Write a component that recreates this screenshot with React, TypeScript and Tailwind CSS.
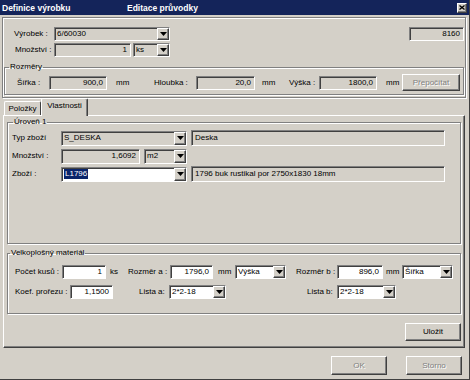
import React from 'react'

const sunken =
  'border border-t-[#808080] border-l-[#808080] border-b-white border-r-white shadow-[inset_1px_1px_0_#404040]'
const raised =
  'border border-t-white border-l-white border-b-[#404040] border-r-[#404040] shadow-[inset_-1px_-1px_0_#808080]'
const etched = 'border border-[#808080] shadow-[inset_1px_1px_0_#fff,1px_1px_0_#fff]'

function Arrow() {
  return (
    <svg width="7" height="4" viewBox="0 0 7 4">
      <polygon points="0,0 7,0 3.5,4" fill="#000" />
    </svg>
  )
}

function Input({ className, value, white }: { className: string; value: string; white?: boolean }) {
  return (
    <div className={`${sunken} ${white ? 'bg-white' : 'bg-[#d4d0c8]'} flex items-center justify-end pr-[3px] ${className}`}>
      {value}
    </div>
  )
}

function TextBox({ className, value }: { className: string; value: string }) {
  return <div className={`${sunken} bg-[#d4d0c8] flex items-center pl-[3px] ${className}`}>{value}</div>
}

function Combo({ className, value, white, selected }: { className: string; value: string; white?: boolean; selected?: boolean }) {
  return (
    <div className={`${sunken} ${white ? 'bg-white' : 'bg-[#d4d0c8]'} flex items-stretch ${className}`}>
      <div className="flex-1 flex items-center pl-[2px] overflow-hidden whitespace-nowrap">
        {selected ? <span className="bg-[#0a246a] text-white px-[1px]">{value}</span> : value}
      </div>
      <div className={`${raised} bg-[#d4d0c8] w-[12px] flex items-center justify-center`}>
        <Arrow />
      </div>
    </div>
  )
}

function Button({ className, label, disabled }: { className: string; label: string; disabled?: boolean }) {
  return (
    <div
      className={`${raised} bg-[#d4d0c8] flex items-center justify-center ${
        disabled ? 'text-[#808080] [text-shadow:1px_1px_0_#fff]' : 'text-black'
      } ${className}`}
    >
      {label}
    </div>
  )
}

export default function App() {
  return (
    <div className="w-[470px] h-[380px] bg-[#d4d0c8] text-[8px] leading-[10px] text-black overflow-hidden border-r border-b border-r-[#404040] border-b-[#404040] font-['Liberation_Sans',Arial,sans-serif]">
      <div className="h-[15px] bg-[#14245a] flex items-center text-white font-bold text-[8.5px]">
        <span className="w-[127px] pl-[2px]">Definice výrobku</span>
        <span>Editace průvodky</span>
        <div className={`${raised} bg-[#d4d0c8] ml-auto mr-[2px] w-[10px] h-[10px] flex items-center justify-center`}>
          <svg width="6" height="5" viewBox="0 0 6 5">
            <path d="M0.5 0.5 L5.5 4.5 M5.5 0.5 L0.5 4.5" stroke="#000" strokeWidth="1.3" />
          </svg>
        </div>
      </div>

      <div className="pl-[2px] pr-[3px] pt-[2px]">
        <div className={`${etched} h-[81px] pt-[9px]`}>
          <div className="flex items-center h-[14px] pl-[11px]">
            <span className="w-[40px]">Výrobek :</span>
            <Combo className="w-[116px] h-[14px]" value="6/60030" />
            <Input className="ml-auto mr-[1px] w-[55px] h-[14px]" value="8160" />
          </div>
          <div className="flex items-center h-[14px] mt-[2px] pl-[12px]">
            <span className="w-[39px]">Množství :</span>
            <Input className="w-[77px] h-[14px]" value="1" />
            <Combo className="ml-[2px] w-[37px] h-[14px]" value="ks" />
          </div>
          <fieldset className={`${etched} mt-[5px] ml-[1px] mr-[1px] h-[33px]`}>
            <legend className="ml-[4px] px-[1px] leading-[10px]">Rozměry</legend>
            <div className="flex items-center h-[17px] mt-[2px] pl-[12px]">
              <span className="w-[32px]">Šířka :</span>
              <Input className="w-[58px] h-[14px]" value="900,0" />
              <span className="ml-[9px] w-[38px]">mm</span>
              <span className="w-[42px]">Hloubka :</span>
              <Input className="w-[59px] h-[14px]" value="20,0" />
              <span className="ml-[7px] w-[27px]">mm</span>
              <span className="w-[30px]">Výška :</span>
              <Input className="w-[58px] h-[14px]" value="1800,0" />
              <span className="ml-[9px] w-[16px]">mm</span>
              <Button className="w-[58px] h-[17px]" label="Přepočítat" disabled />
            </div>
          </fieldset>
        </div>

        <div className="flex items-end h-[17px] ml-[2px]">
          <div className={`border-t border-l border-r border-t-white border-l-white border-r-[#404040] rounded-t-[2px] w-[37px] h-[14px] flex items-center justify-center`}>
            Položky
          </div>
          <div className="relative z-10 border-t border-l border-r border-t-white border-l-white border-r-[#404040] shadow-[inset_-1px_0_0_#808080] rounded-t-[2px] bg-[#d4d0c8] w-[47px] h-[18px] -mb-[1px] flex items-start pt-[2px] justify-center">
            Vlastnosti
          </div>
        </div>

        <div className={`${raised} mx-[1px] h-[233px]`}>
          <fieldset className={`${etched} mt-[1px] mx-[3px] h-[127px]`}>
            <legend className="ml-[5px] px-[1px] leading-[10px]">Úroveň 1</legend>
            <div className="flex items-center h-[16px] mt-[3px] pl-[4px]">
              <span className="w-[49px]">Typ zboží</span>
              <Combo className="w-[126px] h-[15px]" value="S_DESKA" />
              <TextBox className="ml-[4px] w-[254px] h-[16px]" value="Deska" />
            </div>
            <div className="flex items-center h-[16px] mt-[2px] pl-[4px]">
              <span className="w-[49px]">Množství :</span>
              <Input className="w-[79px] h-[15px]" value="1,6092" />
              <Combo className="ml-[4px] w-[43px] h-[15px]" value="m2" />
            </div>
            <div className="flex items-center h-[16px] mt-[2px] pl-[4px]">
              <span className="w-[49px]">Zboží :</span>
              <Combo className="w-[126px] h-[15px]" value="L1796" white selected />
              <TextBox className="ml-[4px] w-[254px] h-[16px]" value="1796 buk rustikal por 2750x1830 18mm" />
            </div>
          </fieldset>

          <fieldset className={`${etched} mt-[4px] mx-[3px] h-[66px]`}>
            <legend className="ml-[2px] px-[1px] leading-[10px]">Velkoplošný materiál</legend>
            <div className="flex items-center h-[14px] mt-[7px] pl-[7px]">
              <span className="w-[47px]">Počet kusů :</span>
              <Input className="w-[44px] h-[14px]" value="1" white />
              <span className="ml-[4px] w-[18px]">ks</span>
              <span className="w-[42px]">Rozměr a :</span>
              <Input className="w-[43px] h-[14px]" value="1796,0" white />
              <span className="ml-[5px] w-[17px]">mm</span>
              <Combo className="w-[51px] h-[14px]" value="Výška" white />
              <span className="ml-[10px] w-[41px]">Rozměr b :</span>
              <Input className="w-[46px] h-[14px]" value="896,0" white />
              <span className="ml-[3px] w-[16px]">mm</span>
              <Combo className="w-[51px] h-[14px]" value="Šířka" white />
            </div>
            <div className="flex items-center h-[14px] mt-[6px] pl-[7px]">
              <span className="w-[55px]">Koef. prořezu :</span>
              <Input className="w-[43px] h-[14px]" value="1,1500" white />
              <span className="ml-[26px] w-[30px]">Lista a:</span>
              <Combo className="w-[57px] h-[14px]" value="2*2-18" white />
              <span className="ml-[81px] w-[30px]">Lista b:</span>
              <Combo className="w-[59px] h-[14px]" value="2*2-18" white />
            </div>
          </fieldset>

          <div className="flex justify-end mt-[9px] mr-[3px]">
            <Button className="w-[56px] h-[18px]" label="Uložit" />
          </div>
        </div>

        <div className="flex justify-end gap-[19px] mt-[8px] mr-[4px]">
          <Button className="w-[56px] h-[19px]" label="OK" disabled />
          <Button className="w-[56px] h-[19px]" label="Storno" disabled />
        </div>
      </div>
    </div>
  )
}
